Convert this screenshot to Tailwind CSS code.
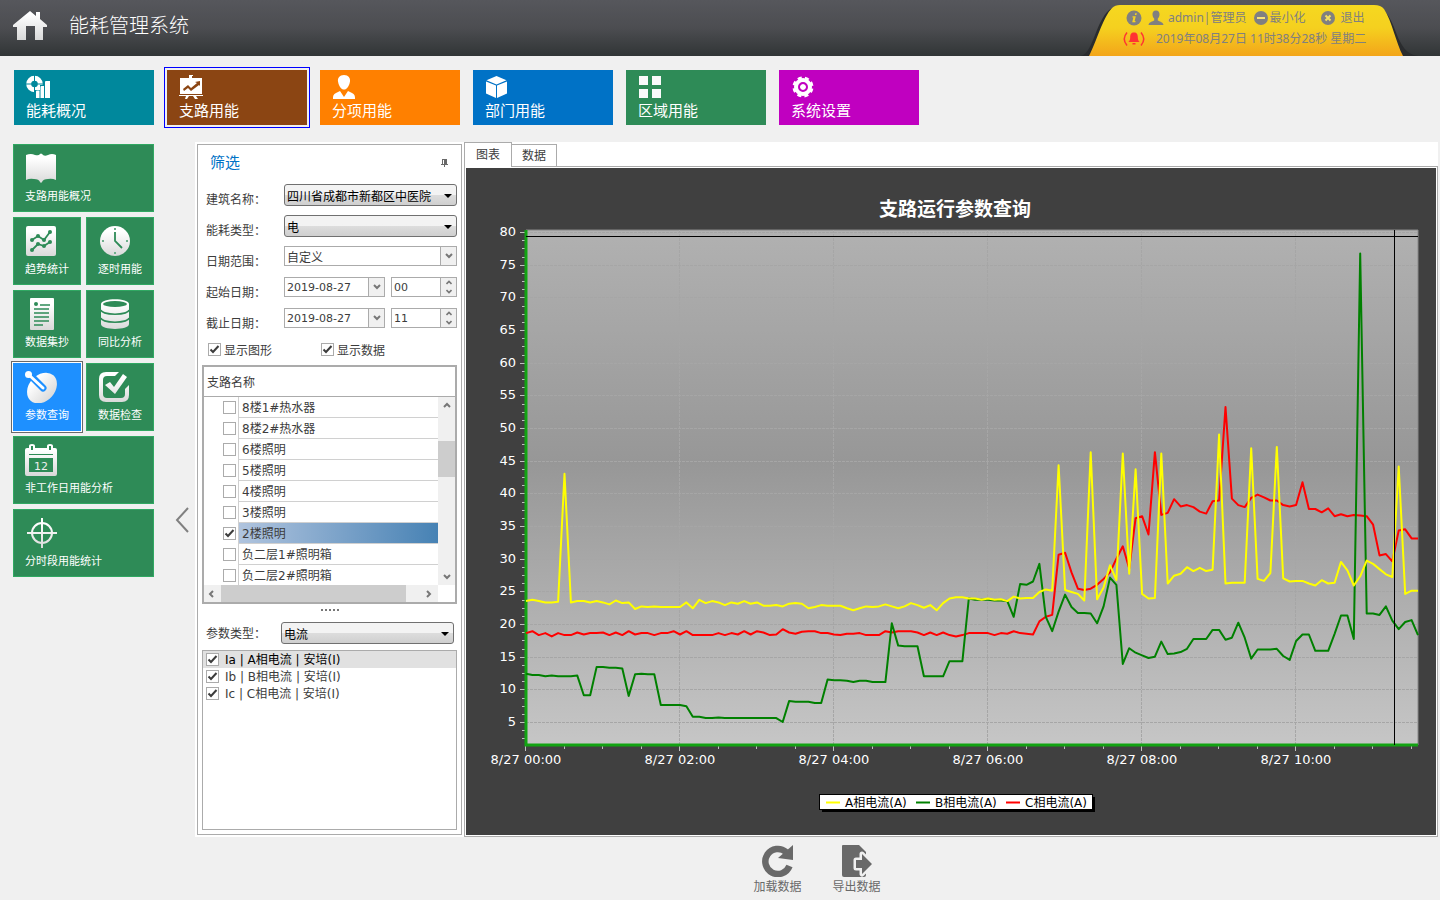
<!DOCTYPE html>
<html lang="zh-CN">
<head>
    <meta charset="UTF-8">
    <meta name="viewport" content="width=device-width, initial-scale=1.0">
    <title>能耗管理系统</title>
    <script src="https://cdn.jsdelivr.net/npm/@tailwindcss/browser@4"></script>
</head>
<body class="min-h-screen flex flex-col bg-[#f0f0f0] text-[#3c3c3c] text-xs font-['DejaVu_Sans','Noto_Sans_CJK_SC',sans-serif]">

    <!-- 图标共用渐变 -->
    <svg class="absolute size-0" aria-hidden="true">
        <defs>
            <linearGradient id="silver" gradientUnits="userSpaceOnUse" x1="0" y1="0" x2="0" y2="32">
                <stop offset="0.2" stop-color="#ffffff"/>
                <stop offset="1" stop-color="#d8d8d8"/>
            </linearGradient>
        </defs>
    </svg>

    <!-- 顶部标题栏 -->
    <header class="h-14 flex items-center justify-between pl-3 pr-[36px] bg-linear-to-b from-[#56575c] via-[#4c4d51] to-[#313536]">
        <div class="flex items-center gap-[21px] pb-[4px]">
            <svg class="size-9" viewBox="0 0 36 36" fill="url(#silver)">
                <path d="M18 3 L24 8 V4 H28 V11 L35 17 V19 H31 V32 H23 V18 H14 V32 H5 V19 H1 V17 Z"/>
            </svg>
            <h1 class="text-xl leading-7 text-white font-light">能耗管理系统</h1>
        </div>
        <div class="relative w-[316px] h-[51px] self-end font-['Noto_Sans','Noto_Sans_CJK_SC',sans-serif] text-[#808080]">
            <svg class="absolute inset-0 overflow-visible" width="316" height="51" viewBox="0 0 316 51">
                <defs>
                    <linearGradient id="badge" x1="0" y1="0" x2="0" y2="1">
                        <stop offset="0" stop-color="#f5d820"/>
                        <stop offset="0.45" stop-color="#f5d01f"/>
                        <stop offset="1" stop-color="#f3a51a"/>
                    </linearGradient>
                </defs>
                <path d="M-7 51 C6 48 8 12 24 3 H292 C310 12 306 48 330 51 Z" fill="#2a2c2e"/>
                <path d="M1 51 C8 38 15 12 24 3 Q27 0 32 0 H286 Q293 0 296 4 C304 16 308 38 315 51 Z" fill="url(#badge)"/>
            </svg>
            <div class="relative flex flex-col gap-[3px] pt-1 pl-[38px]">
                <div class="flex items-center h-[18px]">
                    <svg class="size-4" viewBox="0 0 16 16"><circle cx="8" cy="8" r="7.500" fill="#808080"/><path d="M9.200 3.200h1.600l-.4 1.800H8.800zM6.600 6.200h3.200L8.600 11h1l-.3 1.200H6.200L7.400 7.400h-1z" fill="#f5d420"/></svg>
                    <svg class="size-4 ml-[6px]" viewBox="0 0 16 16" fill="#808080"><path d="M8 .5c2.600 0 3.700 1.800 3.500 4.200-.1 1.900-.9 3-1.700 3.900v2c1.500.9 5.200 1.400 5.700 4.400H.5c.5-3 4.200-3.500 5.700-4.400v-2C5.400 7.700 4.600 6.600 4.500 4.700 4.300 2.300 5.400.5 8 .5z"/></svg>
                    <span class="ml-1">admin|管理员</span>
                    <button class="flex items-center ml-[7px]">
                        <svg class="size-4" viewBox="0 0 16 16"><circle cx="8" cy="8" r="7" fill="#808080"/><path d="M4 7h8v2H4z" fill="#f7e27a"/></svg>
                        最小化
                    </button>
                    <button class="flex items-center ml-[15px] gap-1">
                        <svg class="size-4" viewBox="0 0 16 16"><circle cx="8" cy="8" r="7" fill="#808080"/><path d="M5.500 5.500l5 5M10.500 5.500l-5 5" stroke="#f5e060" stroke-width="2"/></svg>
                        退出
                    </button>
                </div>
                <div class="flex items-center h-[18px] -ml-1">
                    <svg class="w-6 h-4" viewBox="0 0 24 16" fill="none" stroke="#f33" stroke-width="1.500">
                        <path d="M5 1.500Q-.5 8 5 14.500M19 1.500Q24.500 8 19 14.500"/>
                        <path d="M12 1.500c3 0 3.800 2 3.800 5 0 2.500.8 3.500 1.800 4.500H6.400c1-1 1.800-2 1.800-4.500 0-3 .8-5 3.800-5zM10.500 12h3v1.500h-3z" fill="#f33" stroke="none"/>
                    </svg>
                    <span class="ml-[10px] whitespace-nowrap">2019年08月27日 11时38分28秒 星期二</span>
                </div>
            </div>
        </div>
    </header>

    <!-- 一级菜单 -->
    <nav class="flex gap-[13px] p-[14px] pb-[17px] text-[15px] leading-5 text-white">
        <button class="w-[140px] h-[55px] pl-3 flex flex-col justify-center items-start gap-[2px] bg-[#00889c]">
            <svg class="size-6" viewBox="0 0 24 24">
                <circle cx="8.500" cy="9" r="5.800" fill="none" stroke="#fff" stroke-width="5"/>
                <path d="M8.500 0v6M8.500 12v6M0 9h6M11 9h6" stroke="#00889c" stroke-width="1"/>
                <path d="M9 15h5v-5h5V5h5v19H9z" fill="#00889c"/>
                <path d="M10 16.500q0-1 1-1h2.500v7.500H10zM14.500 12q0-1 1-1H18v12h-3.500zM19 7q0-1 1-1h4v17h-5z" fill="#fff"/>
            </svg>
            能耗概况
        </button>
        <button class="w-[140px] h-[55px] pl-3 flex flex-col justify-center items-start gap-[2px] bg-[#8b4513] outline outline-[#0000ff] outline-offset-2" aria-current="page">
            <svg class="size-6" viewBox="0 0 24 24" fill="#fff">
                <path d="M10 0h4v1h-1v2h10v16H1V3h9zM0 20h24v1H0zM7 21h3l-2 3H6zM14 21h3l2 3h-3z"/>
                <path d="M4 14l5-4 3 3 6-5-2-1 5-1v5l-1-1-8 6-3-3-4 3z" fill="#8b4513"/>
            </svg>
            支路用能
        </button>
        <button class="w-[140px] h-[55px] pl-3 flex flex-col justify-center items-start gap-[2px] bg-[#ff8000]">
            <svg class="size-6" viewBox="0 0 24 24" fill="#fff">
                <path d="M12 0c4.500 0 6.500 3 6 6.500-.4 3.500-2.500 6.500-4 7.500q-2 1-4 0c-1.500-1-3.600-4-4-7.500C5.500 3 7.500 0 12 0zM1 24c-.2-3 .5-5 3-6l4-2 4 6 4-6 4 2c2.500 1 3.200 3 3 6z"/>
            </svg>
            分项用能
        </button>
        <button class="w-[140px] h-[55px] pl-3 flex flex-col justify-center items-start gap-[2px] bg-[#0072c6]">
            <svg class="size-6" viewBox="0 0 24 24" fill="#fff">
                <path d="M11.500 1l10 4.200-10 4.300-10-4.300zM1 6.500l10 4V23L1 18.500zM22 6.500l-10 4V23l10-4.500z"/>
            </svg>
            部门用能
        </button>
        <button class="w-[140px] h-[55px] pl-3 flex flex-col justify-center items-start gap-[2px] bg-[#2e8b57]">
            <svg class="size-6" viewBox="0 0 24 24" fill="#fafafa"><path d="M1 1h9v9H1zM14 1h9v9h-9zM1 14h9v9H1zM14 14h9v9h-9z"/></svg>
            区域用能
        </button>
        <button class="w-[140px] h-[55px] pl-3 flex flex-col justify-center items-start gap-[2px] bg-[#c000c0]">
            <svg class="size-6" viewBox="0 0 24 24">
                <circle cx="12" cy="12" r="6.500" fill="none" stroke="#fff" stroke-width="5"/>
                <circle cx="12" cy="12" r="9" fill="none" stroke="#fff" stroke-width="3" stroke-dasharray="4 3.069" stroke-dashoffset="5.500"/>
                <circle cx="12" cy="12" r="3" fill="#fff"/>
                <circle cx="12" cy="12" r="4" fill="none" stroke="#c000c0" stroke-width="2"/>
            </svg>
            系统设置
        </button>
    </nav>

    <main class="flex-1 flex pl-[13px] pr-[2px] pb-[3px]">

        <!-- 左侧功能菜单 -->
        <aside class="w-[141px] shrink-0 grid grid-cols-2 auto-rows-[68px] gap-[5px] content-start pt-[2px] text-[11px] leading-[18px] text-white whitespace-nowrap">
            <button class="col-span-2 flex flex-col items-start gap-1 pt-[7px] pl-[11px] border border-[#30a862] bg-[#2e8b57]">
                <svg class="size-8" viewBox="0 0 32 32" fill="url(#silver)"><path d="M1 3q5-2 9 0 4 1 5-1l1-.5 1 .5q2 3 6 1 4-2 8 0v25q-4-2-8-1-5 0-6 3l-1 1-1-1q-1-3-6-3-4-1-8 1z"/></svg>
                支路用能概况
            </button>
            <button class="flex flex-col items-start gap-1 pt-[7px] pl-[11px] border border-[#30a862] bg-[#2e8b57]">
                <svg class="size-8" viewBox="0 0 32 32">
                    <rect x="1" y="1" width="30" height="30" rx="2" fill="url(#silver)"/>
                    <g fill="none" stroke="#2e8b57" stroke-width="1.800"><path d="M7 15l6-4 6 4 6-8M7 25l6-6 6 2 6-4"/></g>
                    <g fill="#2e8b57"><circle cx="7" cy="15" r="2"/><circle cx="13" cy="11" r="2"/><circle cx="19" cy="15" r="2"/><circle cx="25" cy="7" r="2"/><circle cx="7" cy="25" r="2"/><circle cx="13" cy="19" r="2"/><circle cx="19" cy="21" r="2"/><circle cx="25" cy="17" r="2"/></g>
                </svg>
                趋势统计
            </button>
            <button class="flex flex-col items-start gap-1 pt-[7px] pl-[11px] border border-[#30a862] bg-[#2e8b57]">
                <svg class="size-8" viewBox="0 0 32 32">
                    <circle cx="17" cy="16" r="15" fill="url(#silver)"/>
                    <path d="M17 7v9l7 7" fill="none" stroke="#2e8b57" stroke-width="1.800"/>
                    <path d="M16 3h2v2h-2zM16 27h2v2h-2zM4 15h2v2H4zM28 15h2v2h-2z" fill="#6fb08c"/>
                </svg>
                逐时用能
            </button>
            <button class="flex flex-col items-start gap-1 pt-[7px] pl-[11px] border border-[#30a862] bg-[#2e8b57]">
                <svg class="size-8" viewBox="0 0 32 32">
                    <rect x="5" y="0" width="24" height="32" rx="1" fill="url(#silver)"/>
                    <circle cx="11" cy="6" r="2" fill="#2e8b57"/>
                    <path d="M15 7h10M9 11h15M9 15h15M9 19h15M9 23h15M9 27h9" stroke="#2e8b57" stroke-width="1.600"/>
                </svg>
                数据集抄
            </button>
            <button class="flex flex-col items-start gap-1 pt-[7px] pl-[11px] border border-[#30a862] bg-[#2e8b57]">
                <svg class="size-8" viewBox="0 0 32 32">
                    <path d="M3 6v20c0 6.500 28 6.500 28 0V6c0-6.500-28-6.500-28 0z" fill="url(#silver)"/>
                    <ellipse cx="17" cy="6" rx="12" ry="3" fill="#2e8b57"/>
                    <path d="M3 12c1 5.500 27 5.500 28 0M3 20c1 5.500 27 5.500 28 0" fill="none" stroke="#2e8b57" stroke-width="1.500"/>
                </svg>
                同比分析
            </button>
            <button class="flex flex-col items-start gap-1 pt-2 pl-3 bg-[#1e90ff] ring-1 ring-white outline outline-[#696969] outline-offset-1" aria-current="page">
                <svg class="size-8" viewBox="0 0 32 32">
                    <ellipse cx="17" cy="17" rx="17" ry="13" transform="rotate(-48 17 17)" fill="url(#silver)"/>
                    <path d="M5 4l13 13" stroke="#1e90ff" stroke-width="7" stroke-linecap="round"/>
                    <path d="M4 4l14 13" stroke="#fff" stroke-width="3" stroke-linecap="round"/>
                    <circle cx="3.500" cy="3.500" r="3.500" fill="#fff"/>
                </svg>
                参数查询
            </button>
            <button class="flex flex-col items-start gap-1 pt-[7px] pl-[11px] border border-[#30a862] bg-[#2e8b57]">
                <svg class="size-8" viewBox="0 0 32 32">
                    <path d="M21 1H8Q1 1 1 8v16q0 7 7 7h16q7 0 7-7V14l-4 4v5q0 4-4 4H9q-4 0-4-4V9q0-4 4-4h8z" fill="url(#silver)"/>
                    <path d="M7 14l5-3 4 5L25 3l4 3-12 17z" fill="url(#silver)"/>
                </svg>
                数据检查
            </button>
            <button class="col-span-2 flex flex-col items-start gap-1 pt-[7px] pl-[11px] border border-[#30a862] bg-[#2e8b57]">
                <svg class="size-8" viewBox="0 0 32 32">
                    <path d="M2 4h2V2q0-2 3-2t3 2v2h12V2q0-2 3-2t3 2v2h2q2 0 2 2v24q0 2-2 2H2q-2 0-2-2V6q0-2 2-2z" fill="url(#silver)"/>
                    <path d="M6 2h2v4H6zM24 2h2v4h-2zM4 10h24v1H4zM4 14h24v14H4z" fill="#2e8b57"/>
                    <text x="16" y="26" text-anchor="middle" font-size="11" fill="#eee">12</text>
                </svg>
                非工作日用能分析
            </button>
            <button class="col-span-2 flex flex-col items-start gap-1 pt-[7px] pl-[11px] border border-[#30a862] bg-[#2e8b57]">
                <svg class="size-8" viewBox="0 0 32 32" fill="none" stroke="url(#silver)">
                    <circle cx="17" cy="16" r="10" stroke-width="2"/>
                    <path d="M16 1h2v30h-2zM2 15h30v2H2z" fill="url(#silver)" stroke="none"/>
                </svg>
                分时段用能统计
            </button>
        </aside>

        <button class="w-[41px] shrink-0 flex items-center justify-center pl-[14px]" aria-label="收起菜单">
            <svg class="w-[14px] h-[26px]" viewBox="0 0 14 26" fill="none" stroke="#808080" stroke-width="2"><path d="M13 1L2 13l11 12"/></svg>
        </button>

        <div class="flex-1 min-w-0 flex flex-col">
            <div class="flex bg-white">

                <!-- 筛选面板 -->
                <section class="w-[265px] shrink-0 mt-[2px] mb-[2px] ml-[2px] px-1 pb-1 flex flex-col border border-[#ababab]">
                    <div class="h-[39px] flex items-center justify-between pl-2 pr-[9px] pb-[3px]">
                        <h2 class="text-[15px] leading-5 text-[#0072c6]">筛选</h2>
                        <button aria-label="固定面板"><svg class="w-[7px] h-2" viewBox="0 0 7 8" fill="#696969"><path d="M1 0h5v5h1v1H4v2H3V6H0V5h1zM2 1v4h1V1z" fill-rule="evenodd"/></svg></button>
                    </div>

                    <form class="flex flex-col pl-1" id="filterForm">
                        <div class="h-[31px] flex items-start">
                            <label for="building" class="w-[78px] leading-[33px]">建筑名称：</label>
                            <div class="relative flex-1">
                                <select id="building" class="w-full h-[22px] pl-[2px] pt-[2px] appearance-none rounded-[3px] border border-[#707070] bg-linear-to-b from-[#f3f3f3] from-50% via-[#dddddd] via-50% to-[#cfcfcf] text-black leading-5">
                                    <option>四川省成都市新都区中医院</option>
                                </select>
                                <svg class="absolute right-[5px] top-[10px] w-2 h-1 pointer-events-none" viewBox="0 0 8 4"><path d="M0 0h8L4 4z"/></svg>
                            </div>
                        </div>
                        <div class="h-[31px] flex items-start">
                            <label for="energyType" class="w-[78px] leading-[33px]">能耗类型：</label>
                            <div class="relative flex-1">
                                <select id="energyType" class="w-full h-[22px] pl-[2px] pt-[2px] appearance-none rounded-[3px] border border-[#707070] bg-linear-to-b from-[#f3f3f3] from-50% via-[#dddddd] via-50% to-[#cfcfcf] text-black leading-5">
                                    <option>电</option>
                                </select>
                                <svg class="absolute right-[5px] top-[10px] w-2 h-1 pointer-events-none" viewBox="0 0 8 4"><path d="M0 0h8L4 4z"/></svg>
                            </div>
                        </div>
                        <div class="h-[31px] flex items-start">
                            <label for="dateRange" class="w-[78px] leading-[33px]">日期范围：</label>
                            <div class="relative flex-1">
                                <select id="dateRange" class="w-full h-5 pl-[2px] pt-[2px] appearance-none border border-[#ababab] bg-white leading-[18px]">
                                    <option>自定义</option>
                                </select>
                                <span class="absolute right-px top-px w-4 h-[18px] grid place-items-center border-l border-[#ababab] bg-[#f0f0f0] pointer-events-none"><svg class="w-2 h-[6px]" viewBox="0 0 8 6" fill="none" stroke="#777" stroke-width="2"><path d="M1 1l3 3 3-3"/></svg></span>
                            </div>
                        </div>
                        <div class="h-[31px] flex items-start">
                            <label for="startDate" class="w-[78px] leading-[33px]">起始日期：</label>
                            <div class="flex w-[101px] h-5 border border-[#ababab] bg-white">
                                <input id="startDate" type="text" value="2019-08-27" class="w-[83px] pl-[2px] pt-[2px] text-[11px] leading-4">
                                <button type="button" class="w-4 grid place-items-center border-l border-[#ababab] bg-[#f0f0f0]" aria-label="选择起始日期"><svg class="w-2 h-[6px]" viewBox="0 0 8 6" fill="none" stroke="#777" stroke-width="2"><path d="M1 1l3 3 3-3"/></svg></button>
                            </div>
                            <div class="flex flex-1 h-5 ml-[6px] border border-[#ababab] bg-white">
                                <input type="text" value="00" aria-label="起始小时" class="w-0 flex-1 pl-[2px] pt-[2px] text-[11px] leading-4">
                                <button type="button" class="w-4 grid place-items-center border-l border-[#ababab] bg-[#f0f0f0]" aria-label="调整起始小时"><svg class="w-[6px] h-[14px]" viewBox="0 0 6 14" fill="none" stroke="#777" stroke-width="1.600"><path d="M.5 4L3 1.500 5.500 4M.5 10L3 12.500 5.500 10"/></svg></button>
                            </div>
                        </div>
                        <div class="h-[31px] flex items-start">
                            <label for="endDate" class="w-[78px] leading-[33px]">截止日期：</label>
                            <div class="flex w-[101px] h-5 border border-[#ababab] bg-white">
                                <input id="endDate" type="text" value="2019-08-27" class="w-[83px] pl-[2px] pt-[2px] text-[11px] leading-4">
                                <button type="button" class="w-4 grid place-items-center border-l border-[#ababab] bg-[#f0f0f0]" aria-label="选择截止日期"><svg class="w-2 h-[6px]" viewBox="0 0 8 6" fill="none" stroke="#777" stroke-width="2"><path d="M1 1l3 3 3-3"/></svg></button>
                            </div>
                            <div class="flex flex-1 h-5 ml-[6px] border border-[#ababab] bg-white">
                                <input type="text" value="11" aria-label="截止小时" class="w-0 flex-1 pl-[2px] pt-[2px] text-[11px] leading-4">
                                <button type="button" class="w-4 grid place-items-center border-l border-[#ababab] bg-[#f0f0f0]" aria-label="调整截止小时"><svg class="w-[6px] h-[14px]" viewBox="0 0 6 14" fill="none" stroke="#777" stroke-width="1.600"><path d="M.5 4L3 1.500 5.500 4M.5 10L3 12.500 5.500 10"/></svg></button>
                            </div>
                        </div>
                        <div class="h-[26px] flex items-center pl-[2px] pb-[2px]">
                            <label class="w-[113px] flex items-start gap-[3px] leading-[17px]">
                                <span class="grid">
                                    <input type="checkbox" checked class="peer col-start-1 row-start-1 appearance-none size-[13px] border border-[#ababab] bg-white">
                                    <svg class="col-start-1 row-start-1 size-[13px] invisible peer-checked:visible pointer-events-none" viewBox="0 0 13 13" fill="none" stroke="#3c3c3c" stroke-width="2"><path d="M2.500 6.500L5 9l5.500-6"/></svg>
                                </span>
                                显示图形
                            </label>
                            <label class="flex items-start gap-[3px] leading-[17px]">
                                <span class="grid">
                                    <input type="checkbox" checked class="peer col-start-1 row-start-1 appearance-none size-[13px] border border-[#ababab] bg-white">
                                    <svg class="col-start-1 row-start-1 size-[13px] invisible peer-checked:visible pointer-events-none" viewBox="0 0 13 13" fill="none" stroke="#3c3c3c" stroke-width="2"><path d="M2.500 6.500L5 9l5.500-6"/></svg>
                                </span>
                                显示数据
                            </label>
                        </div>
                    </form>

                    <!-- 支路列表 -->
                    <div class="border-2 border-[#ababab]">
                        <h3 class="h-[30px] pl-[3px] leading-[32px] border-b border-[#ababab]">支路名称</h3>
                        <div class="flex h-[188px] overflow-hidden">
                            <table class="flex-1 block">
                                <tbody id="branchTableBody" class="block"></tbody>
                            </table>
                            <div class="w-[17px] flex flex-col items-center bg-[#f0f0f0]">
                                <svg class="w-2 h-[6px] mt-[5px]" viewBox="0 0 8 6" fill="none" stroke="#777" stroke-width="2"><path d="M1 5l3-3 3 3"/></svg>
                                <div class="w-full h-9 mt-[33px] bg-[#cdcdcd]"></div>
                                <svg class="w-2 h-[6px] mt-auto mb-[5px]" viewBox="0 0 8 6" fill="none" stroke="#777" stroke-width="2"><path d="M1 1l3 3 3-3"/></svg>
                            </div>
                        </div>
                        <div class="h-[17px] mr-[17px] flex items-center pl-1 pr-[6px] bg-[#f0f0f0]">
                            <svg class="w-[6px] h-2" viewBox="0 0 6 8" fill="none" stroke="#777" stroke-width="2"><path d="M5 1L2 4l3 3"/></svg>
                            <div class="w-[185px] h-full ml-[7px] bg-[#cdcdcd]"></div>
                            <svg class="w-[6px] h-2 ml-auto" viewBox="0 0 6 8" fill="none" stroke="#777" stroke-width="2"><path d="M1 1l3 3-3 3"/></svg>
                        </div>
                    </div>

                    <div class="h-[18px] flex justify-center gap-[2px] pt-[5px]">
                        <i class="size-[2px] bg-[#777]"></i><i class="size-[2px] bg-[#777]"></i><i class="size-[2px] bg-[#777]"></i><i class="size-[2px] bg-[#777]"></i><i class="size-[2px] bg-[#777]"></i>
                    </div>

                    <div class="h-7 flex items-start pl-1 pr-[3px]">
                        <label for="paramType" class="w-[75px] leading-[24px]">参数类型：</label>
                        <div class="relative flex-1">
                            <select id="paramType" class="w-full h-[22px] pl-[2px] pt-[2px] appearance-none rounded-[3px] border border-[#707070] bg-linear-to-b from-[#f3f3f3] from-50% via-[#dddddd] via-50% to-[#cfcfcf] text-black leading-5">
                                <option>电流</option>
                            </select>
                            <svg class="absolute right-[5px] top-[10px] w-2 h-1 pointer-events-none" viewBox="0 0 8 4"><path d="M0 0h8L4 4z"/></svg>
                        </div>
                    </div>

                    <ul id="paramList" class="flex-1 border border-[#ababab]"></ul>
                </section>

                <!-- 图表区域 -->
                <section class="flex-1 min-w-0 ml-[2px] flex flex-col">
                    <div class="h-[25px] flex items-end">
                        <button class="w-12 h-[25px] border border-b-0 border-[#ababab] bg-white">图表</button>
                        <button class="w-[45px] h-[23px] pt-px border border-l-0 border-[#ababab] bg-white">数据</button>
                        <div class="flex-1 self-stretch border-b border-[#ababab]"></div>
                    </div>
                    <div class="flex-1 p-px border border-t-0 border-[#ababab]">
                        <svg id="chart" class="block w-full bg-[#404040]" viewBox="0 0 970 667" role="img" aria-label="支路运行参数查询"></svg>
                    </div>
                </section>
            </div>

            <!-- 底部操作 -->
            <footer class="flex-1 flex justify-center gap-[31px] pt-2 pl-px text-[#696969] leading-[18px]">
                <button class="flex flex-col items-center gap-[1px]">
                    <svg class="size-8" viewBox="0 0 32 32"><path d="M28.500 21A12.500 12.500 0 1 1 25 7" fill="none" stroke="#696969" stroke-width="6.500"/><path d="M32 0v15l-15-2z" fill="#696969"/></svg>
                    加载数据
                </button>
                <button class="flex flex-col items-center gap-[1px]">
                    <svg class="size-8" viewBox="0 0 32 32" fill="#696969">
                        <path d="M2 0h16l7 7v23q0 2-2 2H3q-2 0-2-2V1q0-1 1-1z"/>
                        <path d="M15 15h6V9l10 10-10 10v-6h-6z" stroke="#f0f0f0" stroke-width="5" stroke-linejoin="round"/>
                        <path d="M15 15h6V9l10 10-10 10v-6h-6z"/>
                    </svg>
                    导出数据
                </button>
            </footer>
        </div>
    </main>

    <script>
        const branches = [
            { name: '8楼1#热水器' },
            { name: '8楼2#热水器' },
            { name: '6楼照明' },
            { name: '5楼照明' },
            { name: '4楼照明' },
            { name: '3楼照明' },
            { name: '2楼照明', selected: true },
            { name: '负二层1#照明箱' },
            { name: '负二层2#照明箱' }
        ];
        const params = ['Ia | A相电流 | 安培(I)', 'Ib | B相电流 | 安培(I)', 'Ic | C相电流 | 安培(I)'];

        // 每5分钟一个采样点，单位 A
        const phaseA = [23.5,23.7,23.5,23.3,23.3,23.4,43,23.3,23.5,23.5,23.3,23.5,23.3,23,23.6,23.2,23.3,22.3,22.7,22.6,22.7,22.6,22.6,22.6,22.6,23.3,22.4,23.7,23.2,23.5,23.3,22.9,23.3,23.1,23.5,23.1,23.3,22.8,22.8,22.9,22.7,23.1,23.2,23.1,22.4,22.6,22.9,22.8,22.8,22.8,22.4,22.1,22.4,22.7,22.6,22.7,23,22.7,22.4,22.7,23.2,22.9,22.5,22.9,22.1,23.2,23.9,24.1,24.1,23.9,23.9,23.7,23.9,23.7,23.8,23.5,24.2,23.9,24,24,24.9,25.3,25.1,44.3,25.2,24.9,24.6,23.6,46.3,23.8,25.6,29,26.7,46.1,27.7,43.7,24.6,23.9,24,46.1,26.2,27.4,27.7,28.7,28.1,28.6,28.1,28.3,49,26.2,26.3,26.3,26.3,46.9,26.9,26.6,27.8,47.1,27,26.5,26.6,26.6,26.2,25.9,26.7,26.2,26.3,29.5,28.2,25.9,27.3,29.7,29.2,28.4,27.6,27.2,44.1,24.6,25.1,25.1];
        const phaseB = [12.4,12.2,12.2,12,12.1,12,12,12,12.1,9.1,9.1,13.4,13.4,13.3,13.3,13.2,9,12.3,12.4,12.3,12.3,7.6,7.6,7.6,7.6,7.4,5.8,5.8,5.6,5.6,5.7,5.6,5.6,5.6,5.6,5.6,5.6,5.6,5.6,5.6,5,8.2,8.1,8.1,8.1,7.9,7.9,11.5,11.4,11.4,11.3,11.1,11.3,11.3,11.1,11.1,11.1,20.1,16.7,16.6,16.6,16.6,12,12,12,12,14.3,14.3,14.3,23.9,23.7,23.7,23.7,23.6,23.6,23.5,21.1,26.1,26,26.5,29.2,21.1,18.9,21.9,24.5,22.6,21.7,21.7,21.6,20.1,22.7,27.1,26,13.9,16.3,15.6,15.2,14.8,15,17.3,15.4,15.5,15.7,16.2,17.7,17.7,17.7,19.1,19.1,17.6,17.9,20.2,17.9,14.7,16.1,16.1,16.1,16.2,15.1,14.5,17.4,18.4,18.4,15.9,15.9,15.9,18.5,21.3,21.3,17.7,76.7,21.6,21.6,21.4,22.7,20.5,19.2,20.3,20.6,18.3];
        const phaseC = [18.6,18.9,18.3,18.6,18.1,18.6,18.3,18.3,18.7,18.4,18.6,18.6,18.7,18.3,18.7,18.3,18.9,18.4,18.6,18.6,18.3,18.6,18.6,18.9,18.4,18.9,18.3,18.3,18.3,18.3,18.6,18.3,18.6,18.4,18.9,18.4,18.9,18.7,18.3,18.4,19.2,18.7,18.5,18.8,18.9,18.9,18.6,18.6,18.4,18.3,18.5,18.5,18.6,18.3,18.3,18.3,18.9,18.7,18.9,18.9,18.9,18.7,18.3,18.7,18.3,18.7,18.3,18.1,18.3,18.6,18.6,18.6,18.6,18.3,18.6,18.5,18.9,18.6,18.5,18.4,20.4,21.1,21.4,30.6,30.9,27.9,25.4,25.2,25.4,26,26.9,27.9,30,31.9,28.5,36.2,36.5,33.7,46.3,36.7,37,39.1,38,38.2,37.9,37.2,36.9,38.8,38.9,53.2,39.2,38.2,37.9,39.3,39.8,39.4,38.9,38.9,38.2,38,38.2,41.7,37.6,37.6,37.1,37.7,36.5,36.8,36.5,36.7,36.6,36.5,35.2,30.5,30.7,29.6,34.3,34.5,33.1,33.1];

        function checkbox(id, checked) {
            return `<span class="grid">
                <input type="checkbox" id="${id}" ${checked ? 'checked' : ''} class="peer col-start-1 row-start-1 appearance-none size-[13px] border border-[#ababab] bg-white">
                <svg class="col-start-1 row-start-1 size-[13px] invisible peer-checked:visible pointer-events-none" viewBox="0 0 13 13" fill="none" stroke="#3c3c3c" stroke-width="2"><path d="M2.500 6.500L5 9l5.500-6"/></svg>
            </span>`;
        }

        function renderBranches() {
            document.getElementById('branchTableBody').innerHTML = branches.map((b, i) => `
                <tr class="flex h-[21px]">
                    <td class="w-[34px] pl-[19px] pt-1">${checkbox('branch' + i, b.selected)}</td>
                    <td class="flex-1 pl-[3px] border-l border-b border-[#d0d0d0] ${b.selected ? 'bg-linear-to-r from-[#b0c4de] to-[#4682b4]' : ''}">
                        <label for="branch${i}" class="block leading-[22px]">${b.name}</label>
                    </td>
                </tr>`).join('');
        }

        function renderParams() {
            document.getElementById('paramList').innerHTML = params.map((p, i) => `
                <li class="h-[17px] flex items-center gap-[6px] pl-[3px] ${i === 0 ? 'bg-[#e1e1e1] text-black' : ''}">
                    ${checkbox('param' + i, true)}
                    <label for="param${i}" class="leading-[17px] pt-px">${p}</label>
                </li>`).join('');
        }

        // 绘图区边界
        const left = 60, right = 952, top_ = 62, bottom = 577;
        const x = i => left + i * (right - left) / 139;
        const y = v => 64 + (80 - v) * 490 / 75;
        const line = (data, color) =>
            `<polyline points="${data.map((v, i) => x(i).toFixed(1) + ',' + y(v).toFixed(1)).join(' ')}" fill="none" stroke="${color}" stroke-width="2" stroke-linejoin="round"/>`;

        function renderChart() {
            let grid = '', labels = '';
            for (let v = 2.5; v <= 80; v += 1.25) {
                const major = v % 5 === 0, py = Math.round(y(v));
                grid += `<path d="M${major ? left - 6 : left - 4} ${py}.5H${left}" stroke="#c0c0c0"/>`;
                if (major) {
                    grid += `<path d="M${left} ${py}.5H${right}" stroke="#a6a6a6" stroke-dasharray="3 1"/>`;
                    labels += `<text x="50" y="${py + 4}" text-anchor="end">${v}</text>`;
                }
            }
            for (let i = 0; i < 139; i += 6) {
                const major = i % 24 === 0, px = Math.round(x(i)) - 1;
                grid += `<path d="M${px}.5 ${bottom}v${major ? 6 : 4}" stroke="#c0c0c0"/>`;
                if (major) {
                    if (i) grid += `<path d="M${px}.5 ${top_}V${bottom}" stroke="#a6a6a6" stroke-dasharray="3 1"/>`;
                    labels += `<text x="${px + 1}" y="596" text-anchor="middle">8/27 ${String(i / 12).padStart(2, '0')}:00</text>`;
                }
            }

            const legend = [['A相电流(A)', '#ffff00'], ['B相电流(A)', '#008000'], ['C相电流(A)', '#ff0000']].map(([name, color], i) => `
                <path d="M${360 + i * 90} 634.5h14" stroke="${color}" stroke-width="2"/>
                <text x="${379 + i * 90}" y="639" font-size="12" fill="#000">${name}</text>`).join('');

            document.getElementById('chart').innerHTML = `
                <defs>
                    <linearGradient id="plot" x1="0" y1="0" x2="0" y2="1">
                        <stop offset="0" stop-color="#b1b1b1"/>
                        <stop offset="0.45" stop-color="#979797"/>
                        <stop offset="1" stop-color="#c6c6c6"/>
                    </linearGradient>
                </defs>
                <text x="489" y="48" text-anchor="middle" font-size="19" font-weight="bold" fill="#fff">支路运行参数查询</text>
                <rect x="${left}" y="${top_}" width="${right - left}" height="${bottom - top_}" fill="url(#plot)"/>
                <path d="M${left} ${top_}H${right}V${bottom}" fill="none" stroke="#888"/>
                ${grid}
                <g font-size="13" fill="#fff">${labels}</g>
                <path d="M${left} ${top_}V${bottom}H${right}" fill="none" stroke="#12a312" stroke-width="3"/>
                ${line(phaseC, '#ff0000')}
                ${line(phaseB, '#008000')}
                ${line(phaseA, '#ffff00')}
                <path d="M${left} 68.5H${right}M928.5 ${top_}V${bottom}" stroke="#000"/>
                <rect x="356" y="629" width="273" height="15" fill="#000"/>
                <rect x="353.5" y="626.5" width="273" height="15" fill="#fff" stroke="#000"/>
                ${legend}`;
        }

        renderBranches();
        renderParams();
        renderChart();
    </script>
</body>
</html>
